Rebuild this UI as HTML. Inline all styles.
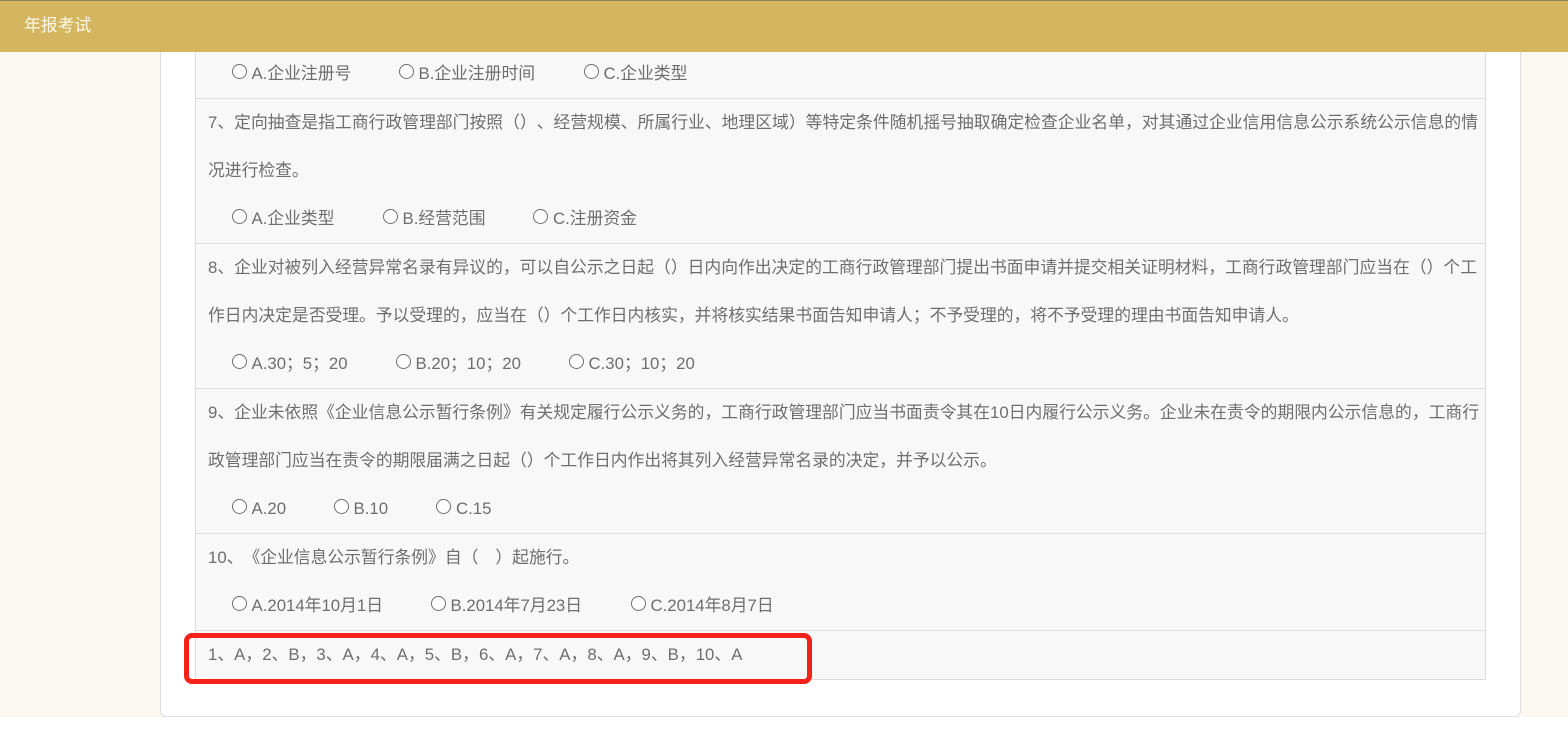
<!DOCTYPE html>
<html lang="zh-CN">
<head>
<meta charset="utf-8">
<title>年报考试</title>
<style>
html,body{margin:0;padding:0;background:#fff;}
body{width:1568px;height:731px;position:relative;overflow:hidden;font-family:"Liberation Sans","Noto Sans CJK SC","Microsoft YaHei",sans-serif;color:#6b6b6b;text-spacing-trim:space-all;}
.bg{position:absolute;left:0;top:0;width:1568px;height:717px;background:#faf8f1;}
.panel{position:absolute;left:160px;top:30px;width:1361px;height:687px;background:#fff;border:1px solid #dedede;border-radius:6px;box-sizing:border-box;}
.table{position:absolute;left:195px;top:40px;width:1291px;height:640px;background:#f8f8f8;border:1px solid #dddddd;box-sizing:border-box;}
.hr{position:absolute;left:195px;width:1291px;height:1px;background:#dfdfdf;}
.hd{position:absolute;left:0;top:0;width:1568px;height:52px;background:#d4b660;border-top:1px solid #8d8158;box-sizing:border-box;}
.hd span{position:absolute;left:24px;top:14px;font-size:16.8px;line-height:22px;color:#fdf8e8;white-space:nowrap;}
.t{position:absolute;font-size:16.8px;line-height:24px;white-space:nowrap;color:#6e6e6e;}
.j{position:absolute;left:208px;font-size:16.8px;line-height:24px;white-space:nowrap;text-align:justify;text-align-last:justify;color:#6e6e6e;}
.r{position:absolute;width:15px;height:15px;border:1px solid #6e6e6e;border-radius:50%;background:#fff;box-sizing:border-box;}
.red{position:absolute;left:184px;top:633px;width:628px;height:51px;border:5px solid #f5221b;border-radius:8px;box-sizing:border-box;}
</style>
</head>
<body>
<div class="bg"></div>
<div class="panel"></div>
<div class="table"></div>

<div class="hr" style="top:98px"></div>
<div class="hr" style="top:243px"></div>
<div class="hr" style="top:388px"></div>
<div class="hr" style="top:533px"></div>
<div class="hr" style="top:630px"></div>

<div class="r" style="left:232px;top:64px"></div><div class="t" style="left:251.5px;top:62px">A.企业注册号</div>
<div class="r" style="left:399px;top:64px"></div><div class="t" style="left:418.5px;top:62px">B.企业注册时间</div>
<div class="r" style="left:584px;top:64px"></div><div class="t" style="left:603.5px;top:62px">C.企业类型</div>

<div class="j" style="top:111px;width:1270px">7、定向抽查是指工商行政管理部门按照（）、经营规模、所属行业、地理区域）等特定条件随机摇号抽取确定检查企业名单，对其通过企业信用信息公示系统公示信息的情</div>
<div class="t" style="left:208px;top:159px">况进行检查。</div>
<div class="r" style="left:232px;top:209px"></div><div class="t" style="left:251.5px;top:207px">A.企业类型</div>
<div class="r" style="left:383px;top:209px"></div><div class="t" style="left:402.5px;top:207px">B.经营范围</div>
<div class="r" style="left:533px;top:209px"></div><div class="t" style="left:553px;top:207px">C.注册资金</div>

<div class="j" style="top:256px;width:1269px">8、企业对被列入经营异常名录有异议的，可以自公示之日起（）日内向作出决定的工商行政管理部门提出书面申请并提交相关证明材料，工商行政管理部门应当在（）个工</div>
<div class="t" style="left:208px;top:304px">作日内决定是否受理。予以受理的，应当在（）个工作日内核实，并将核实结果书面告知申请人；不予受理的，将不予受理的理由书面告知申请人。</div>
<div class="r" style="left:232px;top:354px"></div><div class="t" style="left:251.5px;top:352px">A.30；5；20</div>
<div class="r" style="left:396px;top:354px"></div><div class="t" style="left:415.5px;top:352px">B.20；10；20</div>
<div class="r" style="left:569px;top:354px"></div><div class="t" style="left:588.5px;top:352px">C.30；10；20</div>

<div class="j" style="top:401px;width:1271px">9、企业未依照《企业信息公示暂行条例》有关规定履行公示义务的，工商行政管理部门应当书面责令其在10日内履行公示义务。企业未在责令的期限内公示信息的，工商行</div>
<div class="t" style="left:208px;top:449px">政管理部门应当在责令的期限届满之日起（）个工作日内作出将其列入经营异常名录的决定，并予以公示。</div>
<div class="r" style="left:232px;top:499px"></div><div class="t" style="left:251.5px;top:497px">A.20</div>
<div class="r" style="left:334px;top:499px"></div><div class="t" style="left:353.5px;top:497px">B.10</div>
<div class="r" style="left:436px;top:499px"></div><div class="t" style="left:456px;top:497px">C.15</div>

<div class="t" style="left:208px;top:546px">10、《企业信息公示暂行条例》自（&nbsp;&nbsp;&nbsp;<span style="margin-left:3px">）起施行。</span></div>
<div class="r" style="left:232px;top:596px"></div><div class="t" style="left:251.5px;top:594px">A.2014年10月1日</div>
<div class="r" style="left:431px;top:596px"></div><div class="t" style="left:450.5px;top:594px">B.2014年7月23日</div>
<div class="r" style="left:631px;top:596px"></div><div class="t" style="left:650.5px;top:594px">C.2014年8月7日</div>

<div class="t" style="left:208px;top:643px;letter-spacing:.025px">1、A，2、B，3、A，4、A，5、B，6、A，7、A，8、A，9、B，10、A</div>

<div class="red"></div>

<div class="hd"><span>年报考试</span></div>
</body>
</html>
